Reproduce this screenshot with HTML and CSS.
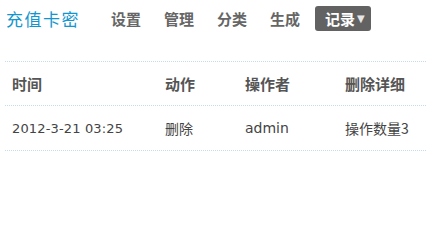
FILE: index.html
```html
<!DOCTYPE html>
<html lang="zh">
<head>
<meta charset="utf-8">
<title>充值卡密</title>
<link rel="stylesheet" href="styles.css">
</head>
<body>
<header class="topbar">
  <div class="brand">充值卡密</div>
  <nav class="nav">
    <a class="nav-item">设置</a>
    <a class="nav-item">管理</a>
    <a class="nav-item">分类</a>
    <a class="nav-item">生成</a>
    <a class="nav-item active">记录<span class="caret">▼</span></a>
  </nav>
</header>
<div class="log">
  <div class="row head">
    <div class="cell">时间</div><div class="cell">动作</div><div class="cell">操作者</div><div class="cell">删除详细</div>
  </div>
  <div class="row body">
    <div class="cell date">2012-3-21 03:25</div><div class="cell">删除</div><div class="cell latin">admin</div><div class="cell">操作数量3</div>
  </div>
</div>
</body>
</html>
```
FILE: styles.css
```css
html, body {
  margin: 0;
  padding: 0;
  background: #fff;
}
body {
  font-family: "DejaVu Sans", "Noto Sans CJK SC", sans-serif;
  color: #444;
  width: 426px;
  overflow: hidden;
}
.topbar {
  display: flex;
  align-items: center;
  height: 37px;
  padding-left: 6px;
}
.brand {
  font-family: "Noto Sans CJK SC", sans-serif;
  font-size: 17px;
  letter-spacing: 1.5px;
  color: #1196cf;
  line-height: 25px;
  width: 105px;
}
.nav {
  display: flex;
  align-items: center;
  gap: 23px;
}
.nav-item {
  font-family: "Noto Sans CJK SC", sans-serif;
  font-size: 15px;
  font-weight: bold;
  color: #666;
  line-height: 25px;
}
.nav-item.active {
  margin-left: -8px;
  background: #626262;
  color: #fff;
  border-radius: 3px;
  padding: 0 6px 0 10px;
  height: 25px;
  display: flex;
  align-items: center;
}
.caret {
  font-size: 10px;
  color: #e6e6e6;
  margin-left: 2px;
  font-family: "DejaVu Sans", sans-serif;
}
.log {
  margin: 24px 0 0 5px;
  width: 421px;
  border-top: 1px dotted #c4dcee;
}
.row {
  display: grid;
  grid-template-columns: 153px 80px 100px 88px;
  align-items: center;
  border-bottom: 1px dotted #c4dcee;
}
.row.head { height: 43px; }
.row.body { height: 44px; }
.cell {
  padding-left: 7px;
  white-space: nowrap;
  font-family: "Noto Sans CJK SC", sans-serif;
}
.head .cell {
  font-size: 15px;
  font-weight: bold;
  color: #555;
}
.body .cell {
  font-size: 14px;
  color: #444;
}
.body .cell.date {
  font-family: "DejaVu Sans", sans-serif;
  font-size: 13px;
  letter-spacing: 0.15px;
}
.body .cell.latin {
  font-family: "DejaVu Sans", sans-serif;
  font-size: 14px;
}
```
